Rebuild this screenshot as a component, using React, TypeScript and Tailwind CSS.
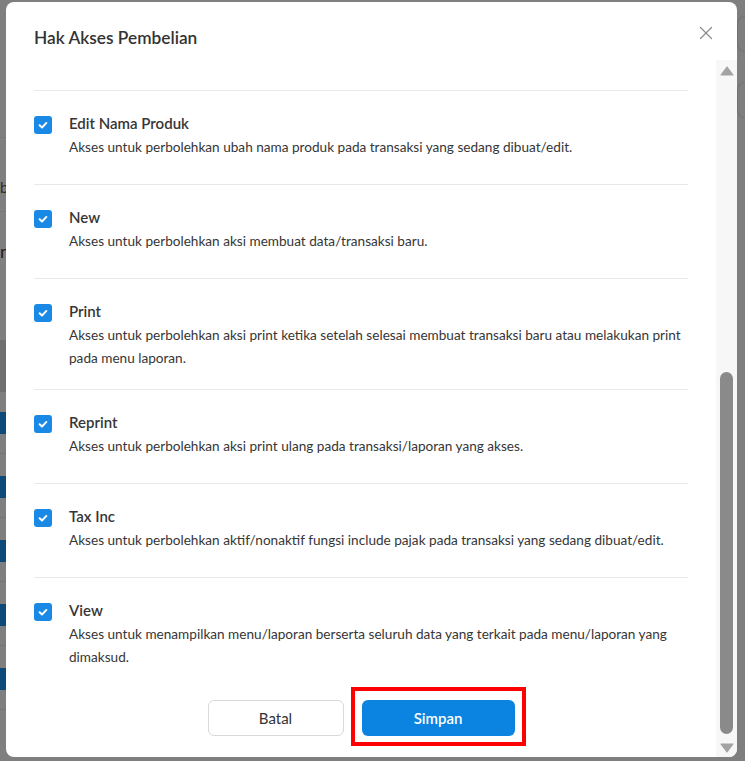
import React from 'react';
import { X } from 'lucide-react';

interface Permission {
  title: string;
  desc: string;
  twoLine?: boolean;
}

const permissions: Permission[] = [
  { title: 'Edit Nama Produk', desc: 'Akses untuk perbolehkan ubah nama produk pada transaksi yang sedang dibuat/edit.' },
  { title: 'New', desc: 'Akses untuk perbolehkan aksi membuat data/transaksi baru.' },
  {
    title: 'Print',
    desc: 'Akses untuk perbolehkan aksi print ketika setelah selesai membuat transaksi baru atau melakukan print pada menu laporan.',
    twoLine: true,
  },
  { title: 'Reprint', desc: 'Akses untuk perbolehkan aksi print ulang pada transaksi/laporan yang akses.' },
  { title: 'Tax Inc', desc: 'Akses untuk perbolehkan aktif/nonaktif fungsi include pajak pada transaksi yang sedang dibuat/edit.' },
  {
    title: 'View',
    desc: 'Akses untuk menampilkan menu/laporan berserta seluruh data yang terkait pada menu/laporan yang dimaksud.',
    twoLine: true,
  },
];

function Checkbox() {
  return (
    <span className="mt-[3px] flex h-[18px] w-[18px] shrink-0 items-center justify-center rounded-[3px] bg-[#1a88e5]">
      <svg width="12" height="12" viewBox="0 0 12 12" fill="none">
        <path d="M2.6 6.2l2.4 2.3 4.4-4.6" stroke="white" strokeWidth="1.9" strokeLinecap="round" strokeLinejoin="round" />
      </svg>
    </span>
  );
}

function PermissionRow({ item, last }: { item: Permission; last: boolean }) {
  const pb = last ? 'pb-0' : item.twoLine ? 'pb-[19px] border-b border-[#e8e8e8]' : 'pb-[25px] border-b border-[#e8e8e8]';
  return (
    <div className={`flex gap-[17px] pt-[22px] ${pb}`}>
      <Checkbox />
      <div className="min-w-0 flex-1">
        <p className="text-[15px] font-semibold leading-[20px] text-[#363636]">{item.title}</p>
        <p className="mt-[3px] text-[13.6px] leading-[23px] text-[#363636]">{item.desc}</p>
      </div>
    </div>
  );
}

function Scrollbar() {
  return (
    <div className="mt-[3px] flex w-[21px] flex-col items-center bg-[#f7f7f7] pb-[4px] pt-[6px]">
      <svg width="14" height="10" viewBox="0 0 14 10">
        <path d="M7 1L13 9H1z" fill="#a3a3a3" stroke="#a3a3a3" strokeWidth="1.2" strokeLinejoin="round" />
      </svg>
      <div className="flex-1" />
      <div className="h-[362px] w-[13px] rounded-full bg-[#8a8a8a]" />
      <div className="h-[9px]" />
      <svg width="14" height="10" viewBox="0 0 14 10">
        <path d="M7 9L13 1H1z" fill="#a3a3a3" stroke="#a3a3a3" strokeWidth="1.2" strokeLinejoin="round" />
      </svg>
    </div>
  );
}

export default function App() {
  return (
    <div className="relative h-[761px] w-[745px] overflow-hidden bg-[#7f7f7f] font-['Lato','Noto_Sans',sans-serif]">
      {/* dimmed page behind the dialog */}
      <div className="flex h-full w-[6px] flex-col">
        <div className="h-[138px] border-b border-[#777]" />
        <div className="h-[74px] border-b border-[#777] pt-[42px] text-[15px] leading-none text-[#3a2a1a]">b</div>
        <div className="h-[128px] pt-[30px] text-[18px] leading-none text-[#2a1a10]">n</div>
        <div className="h-[52px] bg-[#6f6f6f]" />
        <div className="h-[20px]" />
        {[0, 1, 2, 3, 4].map((i) => (
          <div key={i} className="flex flex-col">
            <div className="h-[22px] bg-[#0e4a79]" />
            <div className="h-[20px] border-b border-[#757575]" />
            <div className="h-[22px]" />
          </div>
        ))}
      </div>
      <div className="absolute right-0 top-0 flex h-full w-[8px] flex-col gap-[30px] pt-[16px]">
        <div className="h-[36px] rounded-l-[8px] border border-r-0 border-[#727272]" />
        <div className="h-[36px] rounded-l-[8px] border border-r-0 border-[#727272]" />
      </div>

      {/* dialog */}
      <div className="absolute left-[6px] top-[2px] flex h-[755px] w-[731px] flex-col overflow-hidden rounded-[8px] bg-white">
        <div className="relative h-[55px] shrink-0 px-[28px] pt-[24px]">
          <h2 className="text-[17.3px] font-semibold leading-[24px] text-[#333]">Hak Akses Pembelian</h2>
          <button className="absolute right-[20px] top-[20px] text-[#8c8c8c]">
            <X size={22} strokeWidth={1.3} />
          </button>
        </div>

        <div className="flex min-h-0 flex-1">
          <div className="min-w-0 flex-1 overflow-hidden px-[28px]">
            <div className="border-b border-[#e8e8e8] pb-[28px] pl-[35px]">
              <p className="-mt-[18px] whitespace-nowrap text-[13.6px] leading-[23px] text-[#363636]">
                Akses untuk perbolehkan ubah harga produk pada transaksi yang sedang dibuat/edit.
              </p>
            </div>
            {permissions.map((p, i) => (
              <PermissionRow key={p.title} item={p} last={i === permissions.length - 1} />
            ))}
            <div className="flex justify-center gap-[18px] pt-[31px]">
              <button className="h-[36px] w-[136px] rounded-[6px] border border-[#d9d9d9] bg-white text-[15px] text-[#333]">
                Batal
              </button>
              <span className="relative">
                <button className="h-[36px] w-[153px] rounded-[6px] bg-[#0a84e0] text-[15px] font-semibold text-white">
                  Simpan
                </button>
                <span className="pointer-events-none absolute -bottom-[10px] -left-[11px] -right-[11px] -top-[13px] border-[4px] border-[#ff0000]" />
              </span>
            </div>
          </div>
          <Scrollbar />
        </div>
      </div>
    </div>
  );
}
